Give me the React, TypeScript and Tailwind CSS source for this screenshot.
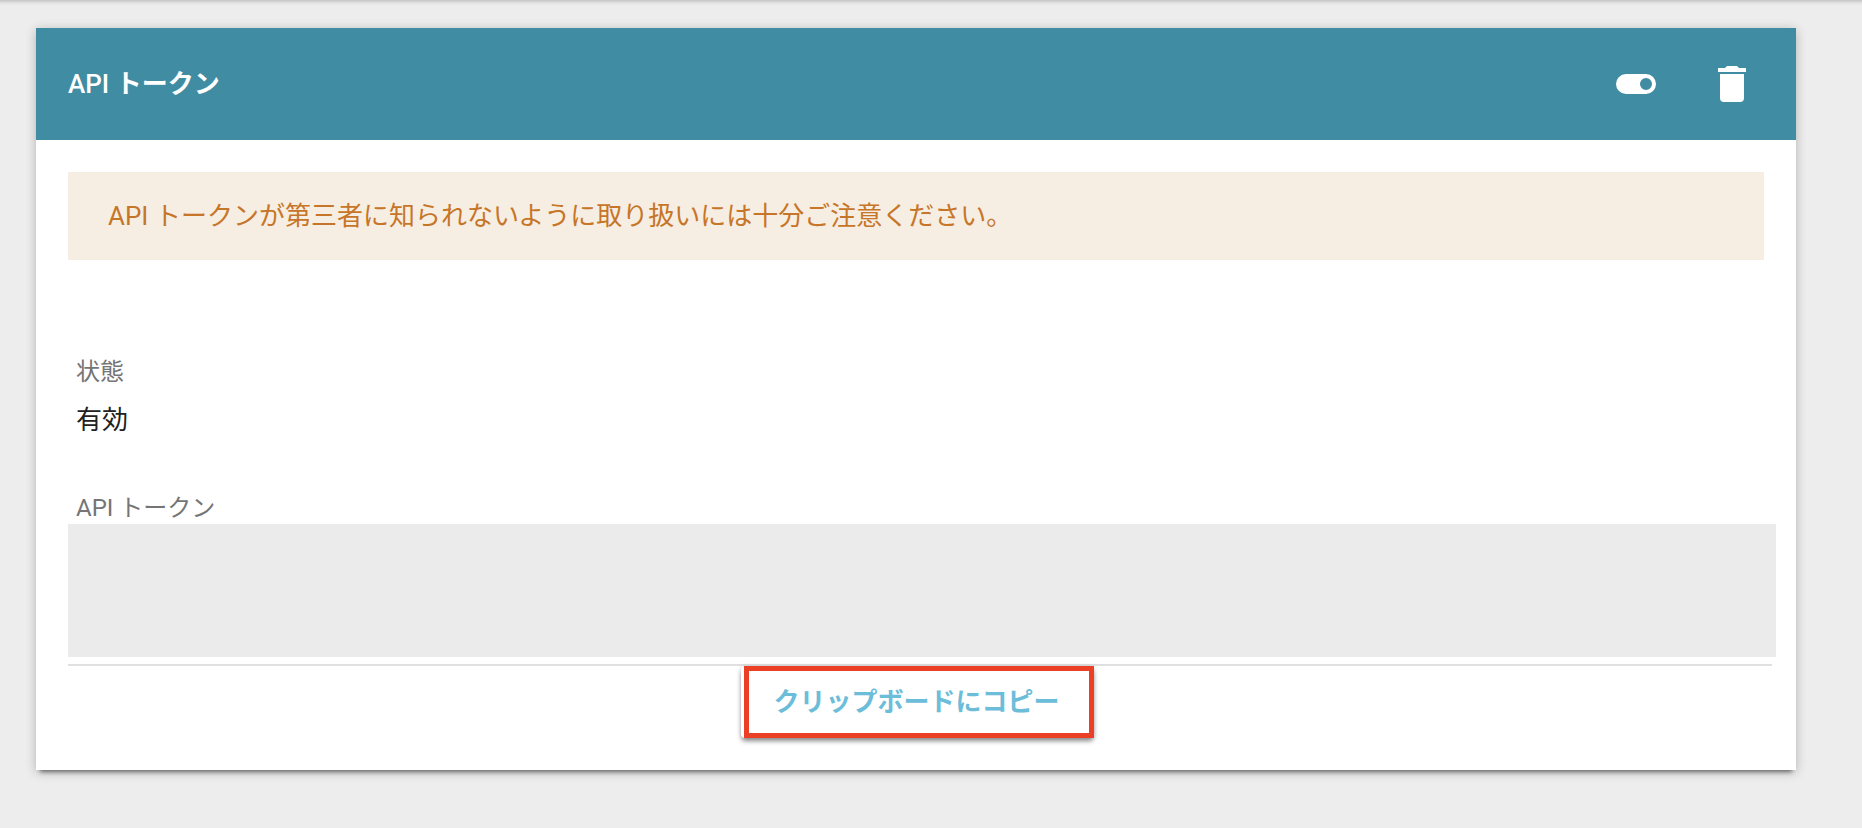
import React, { useRef, useState } from "react";

const ToggleIcon = () => (
  <svg viewBox="0 0 24 24" className="size-12" fill="currentColor" aria-hidden="true">
    <path d="M17 7H7a5 5 0 0 0 0 10h10a5 5 0 0 0 0-10zm0 8a3 3 0 1 1 0-6 3 3 0 0 1 0 6z" />
  </svg>
);

const TrashIcon = () => (
  <svg viewBox="0 0 24 24" className="size-12" fill="currentColor" aria-hidden="true">
    <path d="M6 19a2 2 0 0 0 2 2h8a2 2 0 0 0 2-2V7H6v12zM19 4h-3.5l-1-1h-5l-1 1H5v2h14V4z" />
  </svg>
);

export default function App() {
  const [enabled, setEnabled] = useState(true);
  const [token, setToken] = useState("");
  const tokenRef = useRef<HTMLTextAreaElement>(null);

  const handleCopy = () => {
    tokenRef.current?.select();
    navigator.clipboard?.writeText(token);
  };

  return (
    <div className="min-h-screen bg-[#ededed] pl-9 pr-[66px] pt-7 pb-14 font-['Roboto','Noto_Sans_CJK_JP',sans-serif] text-[26px] leading-10 text-[#212121] shadow-[inset_0_6px_4px_-5px_rgba(0,0,0,0.25)]">
      <section className="bg-white shadow-[0_6px_4px_-4px_rgba(0,0,0,0.45),0_2px_10px_rgba(0,0,0,0.25)]">
        <header className="flex h-28 items-center justify-between bg-[#408ca3] pl-8 pr-4 text-white">
          <h1 className="font-bold">
            <span className="font-medium">API </span>トークン
          </h1>
          <div className="flex">
            <button
              type="button"
              aria-label="有効"
              aria-pressed={enabled}
              onClick={() => setEnabled(!enabled)}
              className="flex size-24 items-center justify-center"
            >
              <ToggleIcon />
            </button>
            <button
              type="button"
              aria-label="削除"
              onClick={() => setToken("")}
              className="flex size-24 items-center justify-center"
            >
              <TrashIcon />
            </button>
          </div>
        </header>

        <div className="p-8">
          <p className="bg-[#f6eee2] px-10 py-6 text-[#c77528]">
            API トークンが第三者に知られないように取り扱いには十分ご注意ください。
          </p>

          <dl className="px-2 pt-[92px]">
            <dt className="text-2xl leading-10 text-[#757575]">状態</dt>
            <dd className="pt-2">{enabled ? "有効" : "無効"}</dd>
          </dl>

          <div className="-mr-2 border-b-2 border-[#e0e0e0] pt-[52px] pb-[7px]">
            <label htmlFor="token" className="block px-2 text-2xl leading-8 text-[#757575]">
              API トークン
            </label>
            <div className="-mr-1">
              <textarea
                id="token"
                ref={tokenRef}
                value={token}
                onChange={(e) => setToken(e.target.value)}
                className="block h-[133px] w-full resize-none bg-[#ebebeb] px-2 outline-none"
              />
            </div>
          </div>

          <div className="flex justify-center pl-[3px]">
            <div className="rounded-sm bg-white pl-[3px] shadow-[0_4px_5px_-1px_rgba(0,0,0,0.4),0_1px_5px_rgba(0,0,0,0.2)]">
              <button
                type="button"
                onClick={handleCopy}
                className="block h-[72px] border-[5px] border-[#eb4025] pl-6 pr-[29px] font-bold text-[#6cbdd9]"
              >
                クリップボードにコピー
              </button>
            </div>
          </div>
        </div>
      </section>
    </div>
  );
}
